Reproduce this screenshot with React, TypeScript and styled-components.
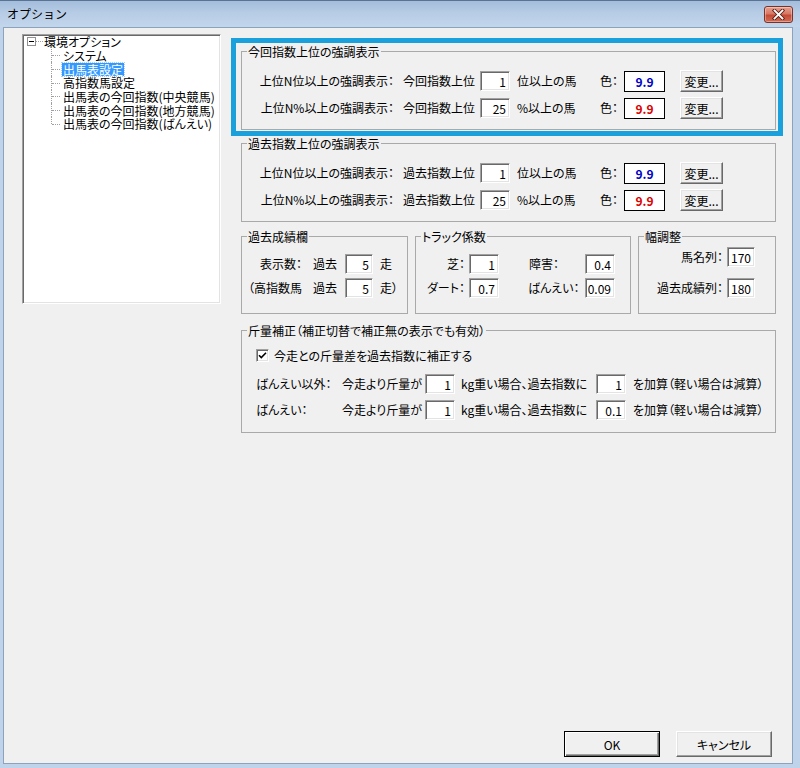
import { Fragment } from "react";
import styled, { createGlobalStyle } from "styled-components";

const GlobalStyle = createGlobalStyle`
  html, body {
    margin: 0;
    padding: 0;
    background: #fff;
  }
  body {
    font-family: "Noto Sans CJK JP", "Liberation Sans", sans-serif;
    font-size: 12px;
    color: #000;
    font-feature-settings: "palt";
  }
`;

const treeItems = [
  { label: "システム" },
  { label: "出馬表設定", selected: true },
  { label: "高指数馬設定" },
  { label: "出馬表の今回指数(中央競馬)" },
  { label: "出馬表の今回指数(地方競馬)" },
  { label: "出馬表の今回指数(ばんえい)" },
];

const hiliteRows = [
  { label: "上位N位以上の強調表示：", value: "1", unit: "位以上の馬", color: "#0000c8" },
  { label: "上位N%以上の強調表示：", value: "25", unit: "%以上の馬", color: "#dc0000" },
];

const weightRows = [
  { label: "ばんえい以外：", kg: "1", add: "1" },
  { label: "ばんえい：", kg: "1", add: "0.1" },
];

const HiliteGroup = ({ title, prefix }: { title: string; prefix: string }) => (
  <Group $pad="11px 0 10px">
    <Legend>{title}</Legend>
    <Grid $cols="161px 77px 30px 90px 24px 41px auto" $gap={5}>
      {hiliteRows.map((row) => (
        <Fragment key={row.unit}>
          <FieldLabel $pr={9}>{row.label}</FieldLabel>
          <Text>{prefix}</Text>
          <NumInput $w={30} defaultValue={row.value} readOnly />
          <Text $pl={7}>{row.unit}</Text>
          <Text>色：</Text>
          <Swatch $color={row.color}>9.9</Swatch>
          <ChangeButton $w={43} $h={22}>
            変更...
          </ChangeButton>
        </Fragment>
      ))}
    </Grid>
  </Group>
);

const App = () => {
  return (
    <>
      <GlobalStyle />
      <Window>
        <TitleBar>
          <Caption>オプション</Caption>
          <CloseButton>
            <svg width="13" height="11" viewBox="0 0 13 11">
              <path d="M2.5 1.5l8 8M10.5 1.5l-8 8" stroke="#5b1d14" strokeWidth="3.6" strokeLinecap="square" />
              <path d="M2.5 1.5l8 8M10.5 1.5l-8 8" stroke="#fff" strokeWidth="1.8" strokeLinecap="square" />
            </svg>
          </CloseButton>
        </TitleBar>

        <Client>
          <Main>
            <Tree>
              <RootRow>
                <svg width="9" height="9" viewBox="0 0 9 9">
                  <rect x="0.5" y="0.5" width="8" height="8" fill="#fff" stroke="#919191" />
                  <path d="M2 4.5h5" stroke="#000" />
                </svg>
                <Stub />
                <NodeLabel>環境オプション</NodeLabel>
              </RootRow>
              <Children>
                {treeItems.map((item, i) => (
                  <ChildRow key={item.label} $last={i === treeItems.length - 1}>
                    <NodeLabel $selected={item.selected}>{item.label}</NodeLabel>
                  </ChildRow>
                ))}
              </Children>
            </Tree>

            <Settings>
              <Highlight>
                <HiliteGroup title="今回指数上位の強調表示" prefix="今回指数上位" />
              </Highlight>

              <Section>
                <HiliteGroup title="過去指数上位の強調表示" prefix="過去指数上位" />
              </Section>

              <GroupRow>
                <Group $pad="10px 0 15px" $w={167}>
                  <Legend>過去成績欄</Legend>
                  <Grid $cols="64px 39px 28px auto" $gap={4}>
                    <FieldLabel $pr={4}>表示数：</FieldLabel>
                    <Text $pl={7}>過去</Text>
                    <NumInput $w={28} defaultValue="5" readOnly />
                    <Text $pl={7}>走</Text>
                    <FieldLabel $pr={4}>（高指数馬</FieldLabel>
                    <Text $pl={7}>過去</Text>
                    <NumInput $w={28} defaultValue="5" readOnly />
                    <Text $pl={7}>走）</Text>
                  </Grid>
                </Group>

                <Group $pad="10px 0 15px" $w={216}>
                  <Legend>トラック係数</Legend>
                  <Grid $cols="53px 30px 86px 30px" $gap={4}>
                    <FieldLabel $pr={4}>芝：</FieldLabel>
                    <NumInput $w={30} defaultValue="1" readOnly />
                    <Text $pl={30}>障害：</Text>
                    <NumInput $w={30} defaultValue="0.4" readOnly />
                    <FieldLabel $pr={4}>ダート：</FieldLabel>
                    <NumInput $w={30} defaultValue="0.7" readOnly />
                    <Text $pl={29}>ばんえい：</Text>
                    <NumInput $w={30} defaultValue="0.09" readOnly />
                  </Grid>
                </Group>

                <Group $pad="3px 0 15px" $w={138}>
                  <Legend>幅調整</Legend>
                  <Grid $cols="88px 28px" $gap={11}>
                    <FieldLabel $pr={4}>馬名列：</FieldLabel>
                    <NumInput $w={28} defaultValue="170" readOnly />
                    <FieldLabel $pr={4}>過去成績列：</FieldLabel>
                    <NumInput $w={28} defaultValue="180" readOnly />
                  </Grid>
                </Group>
              </GroupRow>

              <Section $top={9}>
                <Group $pad="9px 0 12px">
                  <Legend>斤量補正（補正切替で補正無の表示でも有効）</Legend>
                  <CheckRow>
                    <CheckBox>
                      <svg width="9" height="9" viewBox="0 0 9 9">
                        <path d="M1 4.2l2.3 2.3L8 1.8" fill="none" stroke="#000" strokeWidth="1.6" />
                      </svg>
                    </CheckBox>
                    <span>今走との斤量差を過去指数に補正する</span>
                  </CheckRow>
                  <Grid $cols="100px 83px 30px 141px 30px auto" $gap={6}>
                    {weightRows.map((row) => (
                      <Fragment key={row.label}>
                        <Text $pl={14}>{row.label}</Text>
                        <Text>今走より斤量が</Text>
                        <NumInput $w={30} defaultValue={row.kg} readOnly />
                        <Text $pl={6}>kg重い場合、過去指数に</Text>
                        <NumInput $w={30} defaultValue={row.add} readOnly />
                        <Text $pl={7}>を加算（軽い場合は減算）</Text>
                      </Fragment>
                    ))}
                  </Grid>
                </Group>
              </Section>
            </Settings>
          </Main>

          <Footer>
            <Button $w={96} $h={26} $default>
              OK
            </Button>
            <Button $w={96} $h={26}>
              キャンセル
            </Button>
          </Footer>
        </Client>
      </Window>
    </>
  );
};

const Window = styled.div`
  width: 800px;
  height: 768px;
  box-sizing: border-box;
  display: flex;
  flex-direction: column;
  background: #bfd3ea;
  border-top: 1px solid #5a7392;
  overflow: hidden;
`;

const TitleBar = styled.div`
  flex: none;
  height: 26px;
  display: flex;
  align-items: center;
  justify-content: space-between;
  padding: 0 7px;
  background: linear-gradient(180deg, #a3bddb 0%, #b7cce5 45%, #c2d6ec 100%);
`;

const Caption = styled.span`
  font-feature-settings: normal;
  font-size: 12px;
  margin-top: -1px;
`;

const CloseButton = styled.div`
  width: 29px;
  height: 17px;
  box-sizing: border-box;
  display: flex;
  align-items: center;
  justify-content: center;
  border: 1px solid #7a3128;
  border-radius: 3px;
  background: linear-gradient(180deg, #e6a190 0%, #d77865 45%, #c44b36 55%, #d26c55 100%);
  box-shadow: inset 0 0 0 1px rgba(255, 255, 255, 0.35);
`;

const Client = styled.div`
  flex: 1;
  display: flex;
  flex-direction: column;
  margin: 0 7px 4px 3px;
  background: #f0f0f0;
  border: 1px solid #8da2bc;
`;

const Main = styled.div`
  flex: 1;
  display: flex;
  align-items: flex-start;
  padding: 6px 0 0 18px;
`;

const Tree = styled.div`
  width: 199px;
  height: 270px;
  box-sizing: border-box;
  flex: none;
  padding: 0 0 0 4px;
  background: #fff;
  border: 1px solid;
  border-color: #a0a0a0 #fff #fff #a0a0a0;
  box-shadow: inset 1px 1px 0 #696969, inset -1px -1px 0 #e3e3e3;
`;

const RootRow = styled.div`
  height: 13.67px;
  display: flex;
  align-items: center;
`;

const Stub = styled.span`
  width: 7px;
  border-top: 1px dotted #a0a0a0;
`;

const Children = styled.div`
  margin-left: 24px;
`;

const ChildRow = styled.div<{ $last?: boolean }>`
  position: relative;
  height: 13.67px;
  display: flex;
  align-items: center;
  padding-left: 11px;

  &::before {
    content: "";
    position: absolute;
    left: 0;
    top: 0;
    height: ${(p) => (p.$last ? "50%" : "100%")};
    border-left: 1px dotted #a0a0a0;
  }
  &::after {
    content: "";
    position: absolute;
    left: 1px;
    top: 50%;
    width: 8px;
    border-top: 1px dotted #a0a0a0;
  }
`;

const NodeLabel = styled.span<{ $selected?: boolean }>`
  padding: 0 1px;
  line-height: 13px;
  white-space: nowrap;
  color: ${(p) => (p.$selected ? "#fff" : "#000")};
  background: ${(p) => (p.$selected ? "#3399ff" : "transparent")};
  outline: ${(p) => (p.$selected ? "1px dotted #9fcfff" : "none")};
`;

const Settings = styled.div`
  width: 552px;
  flex: none;
  display: flex;
  flex-direction: column;
  margin: 4px 0 0 10px;
`;

const Highlight = styled.div`
  border: 5px solid #1aa1dc;
  padding: 1px 2px 1px 5px;
`;

const Section = styled.div<{ $top?: number }>`
  margin: ${(p) => p.$top ?? 0}px 7px 0 10px;
  display: flex;
  flex-direction: column;
`;

const GroupRow = styled.div`
  display: flex;
  gap: 7px;
  margin: 7px 7px 0 10px;
`;

const Group = styled.fieldset<{ $pad: string; $w?: number }>`
  margin: 0;
  min-width: 0;
  box-sizing: border-box;
  ${(p) => (p.$w ? `width: ${p.$w}px; flex: none;` : "")}
  padding: ${(p) => p.$pad};
  border: 1px solid #a9a9a9;
`;

const Legend = styled.legend`
  margin-left: 5px;
  padding: 0 1px;
  line-height: 15px;
  white-space: nowrap;
`;

const Grid = styled.div<{ $cols: string; $gap: number }>`
  display: grid;
  grid-template-columns: ${(p) => p.$cols};
  row-gap: ${(p) => p.$gap}px;
  align-items: center;
`;

const FieldLabel = styled.span<{ $pr?: number }>`
  text-align: right;
  padding-right: ${(p) => p.$pr ?? 0}px;
  white-space: nowrap;
  line-height: 14px;
`;

const Text = styled.span<{ $pl?: number }>`
  padding-left: ${(p) => p.$pl ?? 0}px;
  white-space: nowrap;
  line-height: 14px;
`;

const NumInput = styled.input<{ $w: number }>`
  width: ${(p) => p.$w}px;
  height: 20px;
  box-sizing: border-box;
  margin: 0;
  padding: 0 3px 0 0;
  font: inherit;
  font-size: 12px;
  color: #000;
  text-align: right;
  background: #fff;
  border: 1px solid;
  border-color: #a0a0a0 #fff #fff #a0a0a0;
  box-shadow: inset 1px 1px 0 #696969, inset -1px -1px 0 #e3e3e3;
  outline: none;
`;

const Swatch = styled.span<{ $color: string }>`
  width: 41px;
  height: 21px;
  box-sizing: border-box;
  display: flex;
  align-items: center;
  justify-content: center;
  border: 1px solid #000;
  background: #fff;
  color: ${(p) => p.$color};
  font-weight: bold;
  font-size: 12px;
`;

const Button = styled.button<{ $w: number; $h: number; $default?: boolean }>`
  width: ${(p) => p.$w}px;
  height: ${(p) => p.$h}px;
  box-sizing: border-box;
  margin: 0;
  padding: 0;
  font: inherit;
  font-size: 12px;
  color: #000;
  background: #f0f0f0;
  border: 1px solid;
  border-color: ${(p) => (p.$default ? "#000" : "#fff #696969 #696969 #fff")};
  box-shadow: ${(p) =>
    p.$default
      ? "inset 1px 1px 0 #fff, inset -1px -1px 0 #696969, inset -2px -2px 0 #a0a0a0"
      : "inset -1px -1px 0 #a0a0a0, inset 1px 1px 0 #e3e3e3"};
`;

const ChangeButton = styled(Button)`
  justify-self: start;
  margin-left: 15px;
`;

const CheckRow = styled.div`
  height: 16px;
  display: flex;
  align-items: center;
  gap: 5px;
  padding-left: 14px;
  margin-bottom: 11px;
`;

const CheckBox = styled.span`
  width: 13px;
  height: 13px;
  box-sizing: border-box;
  display: inline-flex;
  align-items: center;
  justify-content: center;
  background: #fff;
  border: 1px solid;
  border-color: #a0a0a0 #fff #fff #a0a0a0;
  box-shadow: inset 1px 1px 0 #696969, inset -1px -1px 0 #e3e3e3;
`;

const Footer = styled.div`
  display: flex;
  justify-content: flex-end;
  gap: 16px;
  padding: 0 20px 6px 0;
`;

export default App;
